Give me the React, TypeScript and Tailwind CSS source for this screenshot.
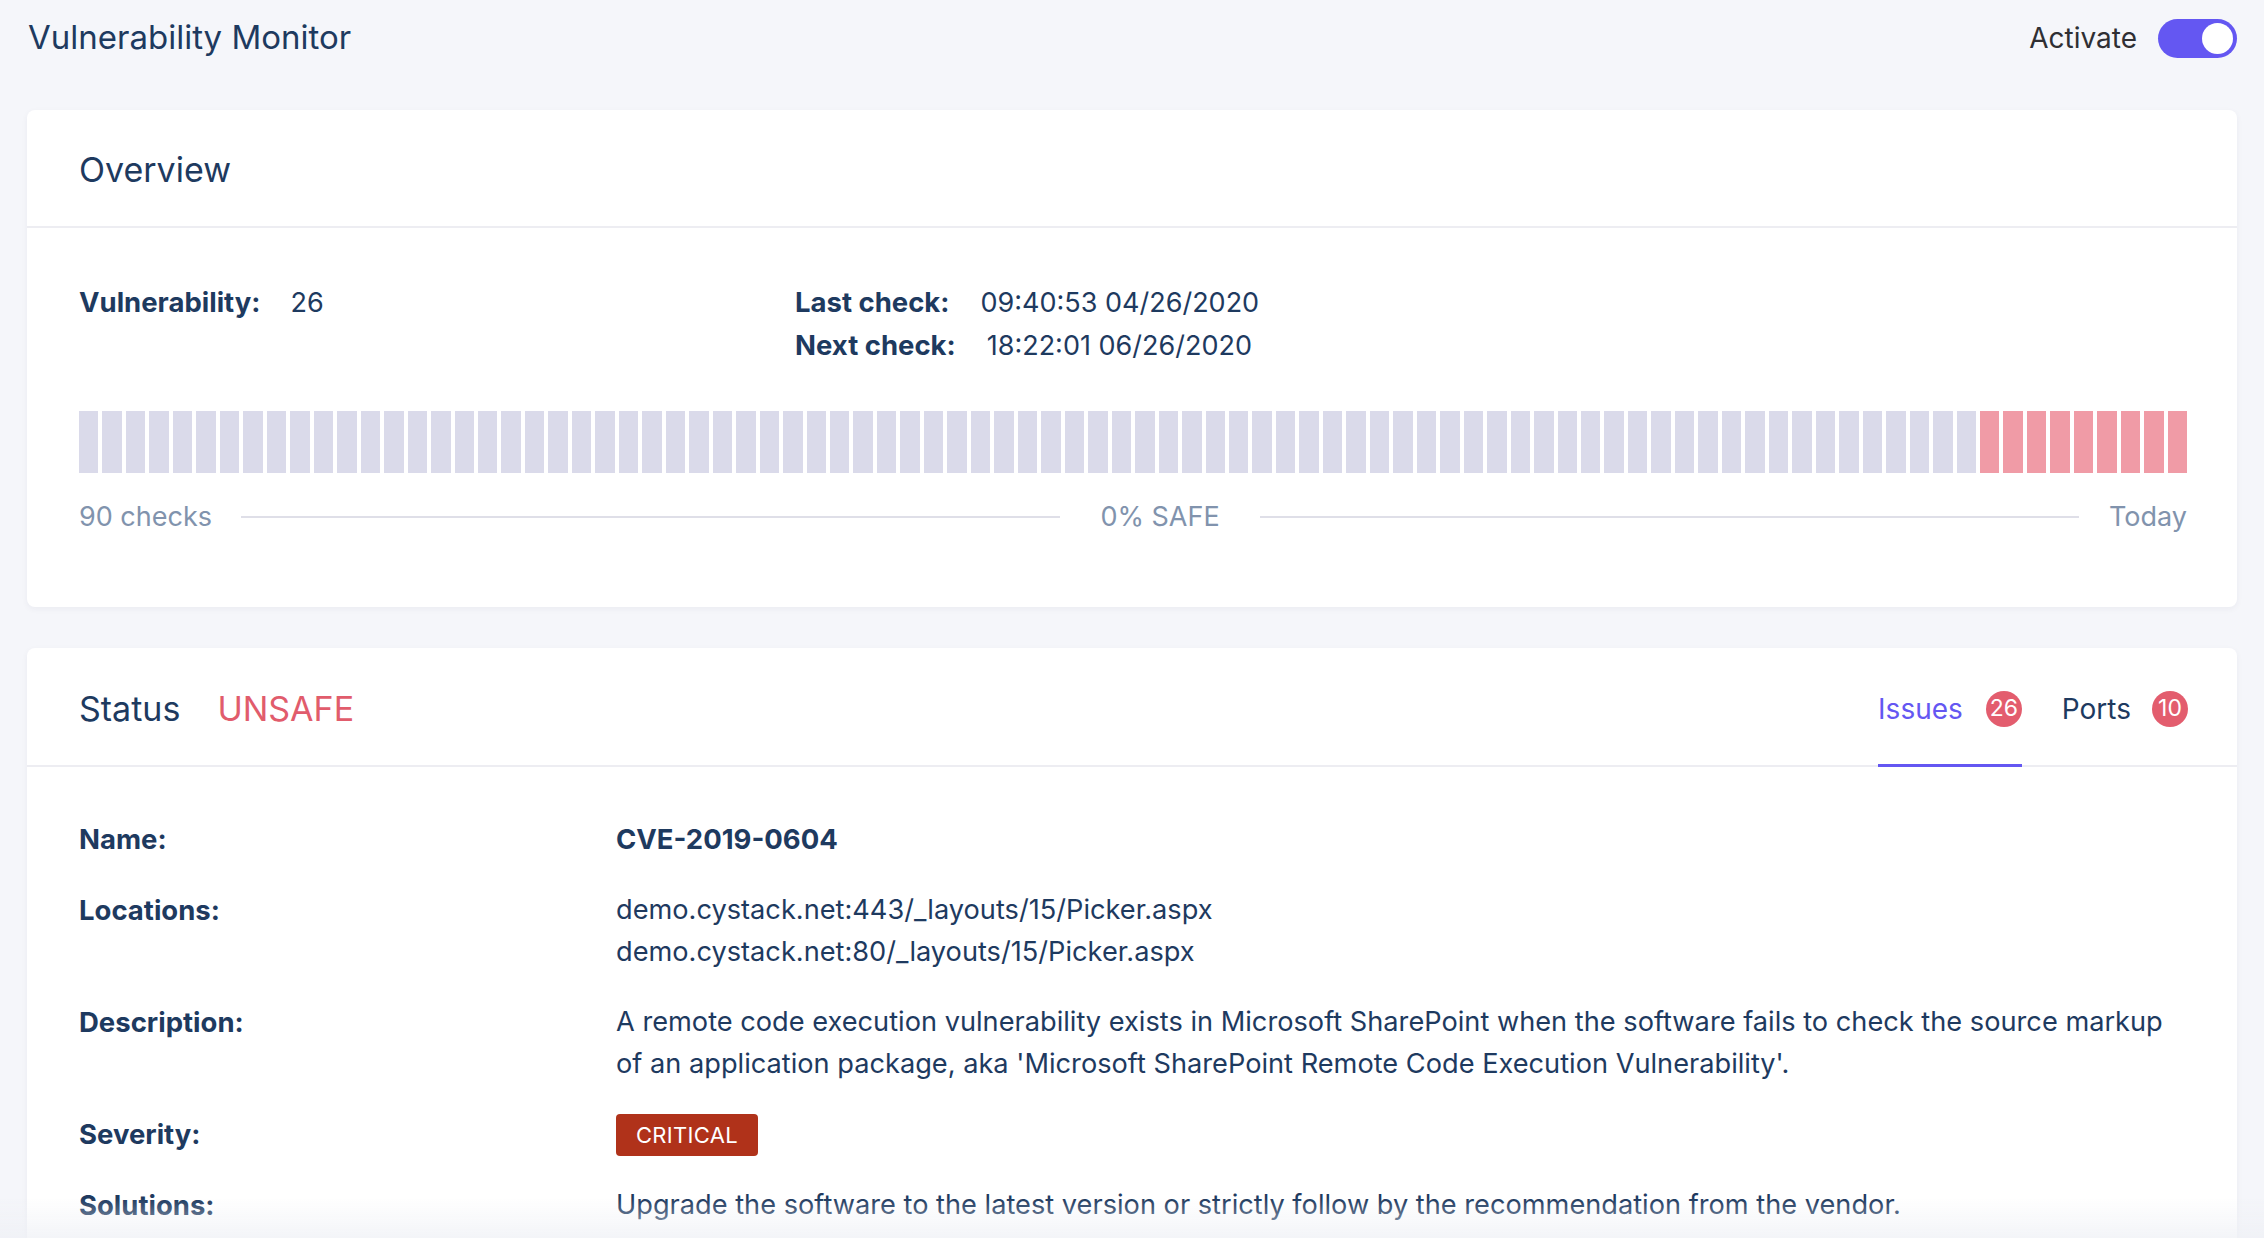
import React from "react";

const NAVY = "text-[#1e3a5f]";

function Bars() {
  const bars = Array.from({ length: 90 }, (_, i) => i >= 81);
  return (
    <div className="flex h-[62px] gap-[4px]">
      {bars.map((red, i) => (
        <div key={i} className={red ? "flex-1 bg-[#f09ba6]" : "flex-1 bg-[#dadaea]"} />
      ))}
    </div>
  );
}

function Badge({ n }: { n: string }) {
  return (
    <span className="flex h-[36px] w-[36px] items-center justify-center rounded-full bg-[#e35d6e] text-[23px] leading-none text-white">
      {n}
    </span>
  );
}

export default function App() {
  const rows: { label: string; value: React.ReactNode }[] = [
    { label: "Name:", value: <span className="text-[27.5px] font-bold">CVE-2019-0604</span> },
    {
      label: "Locations:",
      value: (
        <>
          <div>demo.cystack.net:443/_layouts/15/Picker.aspx</div>
          <div>demo.cystack.net:80/_layouts/15/Picker.aspx</div>
        </>
      ),
    },
    {
      label: "Description:",
      value: (
        <div>
          A remote code execution vulnerability exists in Microsoft SharePoint when the software fails to check the source markup of an application package, aka 'Microsoft SharePoint Remote Code Execution Vulnerability'.
        </div>
      ),
    },
    {
      label: "Severity:",
      value: (
        <span className="inline-flex h-[42px] items-center rounded-[4px] bg-[#b0321a] px-[20px] text-[22px] tracking-[0.3px] text-white">
          CRITICAL
        </span>
      ),
    },
    {
      label: "Solutions:",
      value: <div>Upgrade the software to the latest version or strictly follow by the recommendation from the vendor.</div>,
    },
  ];

  return (
    <div
      className={`min-h-screen bg-[#f5f6fa] px-[27px] pb-[40px] ${NAVY}`}
      style={{ fontFamily: "Inter, 'Noto Sans', sans-serif" }}
    >
      <header className="flex h-[76px] items-center justify-between pl-[1px]">
        <h1 className="text-[33px] font-normal">Vulnerability Monitor</h1>
        <div className="flex items-center gap-[21px]">
          <span className="text-[28px] text-[#2f2f33]">Activate</span>
          <div className="flex h-[39px] w-[79px] items-center justify-end rounded-full bg-[#6457f2] px-[4px]">
            <div className="h-[31px] w-[31px] rounded-full bg-white" />
          </div>
        </div>
      </header>

      <div className="mt-[34px] rounded-[8px] bg-white shadow-[0_2px_6px_rgba(30,40,80,0.05)]">
        <div className="flex h-[118px] items-center border-b-2 border-[#ededf2] pl-[52px] pr-[49px] pt-[3px]">
          <h2 className="text-[34px] font-normal">Overview</h2>
        </div>
        <div className="pb-[69px] pl-[52px] pr-[50px] pt-[53px] text-[27px] leading-[42px]">
          <div className="flex">
            <div className="w-[716px]">
              <span className="text-[27.5px] font-bold">Vulnerability:</span>
              <span className="ml-[30px]">26</span>
            </div>
            <div>
              <div>
                <span className="text-[27.5px] font-bold">Last check:</span>
                <span className="ml-[31px]">09:40:53 04/26/2020</span>
              </div>
              <div>
                <span className="text-[27.5px] font-bold">Next check:</span>
                <span className="ml-[31px]">18:22:01 06/26/2020</span>
              </div>
            </div>
          </div>
          <div className="mt-[44px]">
            <Bars />
          </div>
          <div className="mt-[23px] flex items-center text-[#8193ad]">
            <span>90 checks</span>
            <div className="ml-[29px] h-[2px] flex-1 bg-[#dfdfe8]" />
            <span className="mx-[40px]">0% SAFE</span>
            <div className="mr-[30px] h-[2px] flex-1 bg-[#dfdfe8]" />
            <span>Today</span>
          </div>
        </div>
      </div>

      <div className="mt-[41px] rounded-[8px] bg-white shadow-[0_2px_6px_rgba(30,40,80,0.05)]">
        <div className="flex h-[119px] items-stretch justify-between border-b-2 border-[#ededf2] pl-[52px] pr-[49px] pt-[4px]">
          <div className="flex items-center gap-[37px] text-[34px]">
            <span>Status</span>
            <span className="text-[#e15c6c]">UNSAFE</span>
          </div>
          <div className="flex items-stretch gap-[40px] text-[28px]">
            <div className="relative flex items-center gap-[23px] text-[#6457f2]">
              <span>Issues</span>
              <Badge n="26" />
              <div className="absolute -bottom-[2px] left-0 right-0 h-[3px] bg-[#6457f2]" />
            </div>
            <div className="flex items-center gap-[21px]">
              <span>Ports</span>
              <Badge n="10" />
            </div>
          </div>
        </div>
        <div className="grid grid-cols-[537px_1fr] gap-y-[28px] pb-[60px] pl-[52px] pr-[50px] pt-[51px] text-[27.2px] leading-[42px]">
          {rows.map((r) => (
            <React.Fragment key={r.label}>
              <div className="text-[27.5px] font-bold">{r.label}</div>
              <div>{r.value}</div>
            </React.Fragment>
          ))}
        </div>
      </div>
      <div className="pointer-events-none fixed bottom-0 left-0 right-0 h-[40px] bg-gradient-to-b from-transparent to-[#eef0f5]/70" />
    </div>
  );
}
